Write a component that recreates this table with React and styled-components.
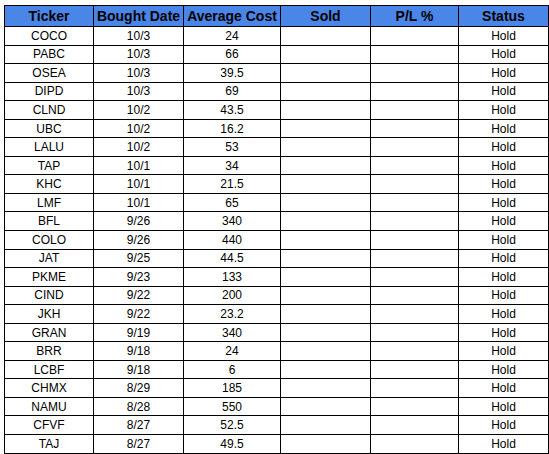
import React from 'react'
import styled, { createGlobalStyle } from 'styled-components'

const rows = [
  ['COCO', '10/3', '24'],
  ['PABC', '10/3', '66'],
  ['OSEA', '10/3', '39.5'],
  ['DIPD', '10/3', '69'],
  ['CLND', '10/2', '43.5'],
  ['UBC', '10/2', '16.2'],
  ['LALU', '10/2', '53'],
  ['TAP', '10/1', '34'],
  ['KHC', '10/1', '21.5'],
  ['LMF', '10/1', '65'],
  ['BFL', '9/26', '340'],
  ['COLO', '9/26', '440'],
  ['JAT', '9/25', '44.5'],
  ['PKME', '9/23', '133'],
  ['CIND', '9/22', '200'],
  ['JKH', '9/22', '23.2'],
  ['GRAN', '9/19', '340'],
  ['BRR', '9/18', '24'],
  ['LCBF', '9/18', '6'],
  ['CHMX', '8/29', '185'],
  ['NAMU', '8/28', '550'],
  ['CFVF', '8/27', '52.5'],
  ['TAJ', '8/27', '49.5']
]

const columns = [
  { title: 'Ticker', width: 89 },
  { title: 'Bought Date', width: 90 },
  { title: 'Average Cost', width: 97 },
  { title: 'Sold', width: 90 },
  { title: 'P/L %', width: 88 },
  { title: 'Status', width: 90 }
]

const GlobalStyle = createGlobalStyle`
  body {
    margin: 0;
    background: #ffffff;
    font-family: 'Liberation Sans', Arial, sans-serif;
  }
`

const Page = styled.div`
  padding: 5px 0 0 4px;
`

const Sheet = styled.table`
  border-collapse: collapse;
  table-layout: fixed;
  width: 545px;
  border: 1px solid #000;
`

const HeadRow = styled.tr`
  height: 21px;
  background: #4a86e8;
`

const HeadCell = styled.th`
  border: 1px solid #000;
  padding: 0 1px;
  font-size: 14px;
  font-weight: bold;
  color: #000;
  text-align: center;
  white-space: nowrap;
  overflow: hidden;
  line-height: 16px;
`

const Row = styled.tr`
  height: 18.55px;
`

const Cell = styled.td`
  border: 1px solid #000;
  padding: 0 2px;
  font-size: 12px;
  color: #000;
  text-align: center;
  white-space: nowrap;
  line-height: 14px;
`

const App = () => {
  return (
    <Page>
      <GlobalStyle />
      <Sheet>
        <colgroup>
          {columns.map((col) => (
            <col key={col.title} style={{ width: col.width }} />
          ))}
        </colgroup>
        <thead>
          <HeadRow>
            {columns.map((col) => (
              <HeadCell key={col.title}>{col.title}</HeadCell>
            ))}
          </HeadRow>
        </thead>
        <tbody>
          {rows.map(([ticker, date, cost]) => (
            <Row key={ticker}>
              <Cell>{ticker}</Cell>
              <Cell>{date}</Cell>
              <Cell>{cost}</Cell>
              <Cell></Cell>
              <Cell></Cell>
              <Cell>Hold</Cell>
            </Row>
          ))}
        </tbody>
      </Sheet>
    </Page>
  )
}

export default App
